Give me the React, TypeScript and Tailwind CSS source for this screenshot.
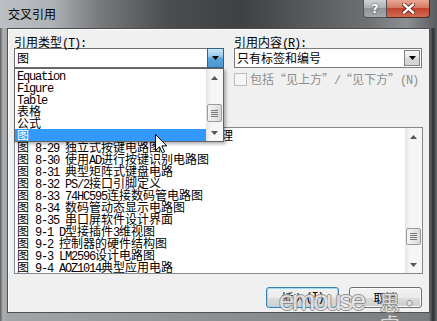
import React from "react";

const CJK = "font-['Noto_Sans_CJK_SC','Noto_Sans',sans-serif]";

function Mono({ children }: { children: React.ReactNode }) {
  return (
    <span className="font-['Liberation_Mono',monospace] tracking-[-1.2px] whitespace-pre">
      {children}
    </span>
  );
}

// ascii runs in mono (6px per char like SimSun), the rest in the CJK face
function Txt({ s }: { s: string }) {
  const parts = s.split(/([\x20-\x7e]+)/).filter((p) => p.length > 0);
  return (
    <>
      {parts.map((p, i) =>
        /^[\x20-\x7e]+$/.test(p) ? <Mono key={i}>{p}</Mono> : <span key={i}>{p}</span>
      )}
    </>
  );
}

function Arrow({ up, color }: { up?: boolean; color: string }) {
  return (
    <svg width="7" height="4" viewBox="0 0 7 4">
      <path d={up ? "M3.5 0L7 4H0Z" : "M0 0H7L3.5 4Z"} fill={color} />
    </svg>
  );
}

function VScroll({ thumb }: { thumb: string }) {
  return (
    <div className="w-[17px] h-full flex flex-col bg-[linear-gradient(90deg,#e4e4e4,#f6f6f6_30%,#f6f6f6)]">
      <div className="h-[17px] flex items-center justify-center">
        <Arrow up color="#555" />
      </div>
      <div className="flex-1">
        <div
          className={`${thumb} mx-[1px] rounded-[2px] border border-[#9a9a9a] bg-[linear-gradient(90deg,#f4f4f4,#e8e8e8_50%,#d8d8d8)] flex flex-col items-center justify-center gap-[1px]`}
        >
          <div className="w-[7px] h-[1px] bg-[#7a7a7a]" />
          <div className="w-[7px] h-[1px] bg-[#7a7a7a]" />
          <div className="w-[7px] h-[1px] bg-[#7a7a7a]" />
          <div className="w-[7px] h-[1px] bg-[#7a7a7a]" />
        </div>
      </div>
      <div className="h-[17px] flex items-center justify-center">
        <Arrow color="#555" />
      </div>
    </div>
  );
}

const dropItems = ["Equation", "Figure", "Table", "表格", "公式", "图"];

const rows = [
  "图 8-28 矩阵式键盘的行列扫描电路原理",
  "图 8-29 独立式按键电路图",
  "图 8-30 使用AD进行按键识别电路图",
  "图 8-31 典型矩阵式键盘电路",
  "图 8-32 PS/2接口引脚定义",
  "图 8-33 74HC595连接数码管电路图",
  "图 8-34 数码管动态显示电路图",
  "图 8-35 串口屏软件设计界面",
  "图 9-1 D型接插件3维视图",
  "图 9-2 控制器的硬件结构图",
  "图 9-3 LM2596设计电路图",
  "图 9-4 AOZ1014典型应用电路",
];

export default function App() {
  return (
    <div
      className={`relative w-[437px] h-[321px] overflow-hidden flex flex-col bg-[linear-gradient(90deg,#5a5c5e_0px,#aeb1b4_3px,#a2a5a8_7px,#8d9092_50%,#7a7c7e_429px,#2e2f30_433px,#6a6c6e_437px)] ${CJK} text-[12px] text-black`}
    >
      {/* title bar */}
      <div className="h-[28px] shrink-0 flex items-start bg-[linear-gradient(90deg,#bcc0c4_0%,#aeb2b6_12%,#7a7c7e_22%,#4c4d4e_38%,#3f4041_55%,#5b5c5d_72%,#6e7072_84%,#8c8f92_93%,#5a5c5e_100%)]">
        <div className="pl-[8px] pt-[7px] leading-[14px] text-[12px] text-black">交叉引用</div>
        <div className="flex-1" />
        <div className="flex pr-[7px]">
          <div className="w-[24px] h-[18px] rounded-bl-[4px] border border-t-0 border-[#4e5052] bg-[linear-gradient(#cfd1d3,#aeb1b4_45%,#929598_50%,#a4a7aa)] flex items-center justify-center text-white font-['DejaVu_Sans',sans-serif] font-bold text-[12px] leading-none [text-shadow:0_0_2px_#333]">
            ?
          </div>
          <div className="w-[43px] h-[18px] rounded-br-[4px] border border-t-0 border-l-0 border-[#4a2a24] bg-[linear-gradient(#e9a795,#d47a64_45%,#c2442e_50%,#cf6a52)] flex items-center justify-center">
            <svg width="13" height="11" viewBox="0 0 13 11">
              <path d="M2 1.5L11 9.5M11 1.5L2 9.5" stroke="#5a1a10" strokeWidth="4" strokeLinecap="square" />
              <path d="M2 1.5L11 9.5M11 1.5L2 9.5" stroke="#fff" strokeWidth="2.4" strokeLinecap="square" />
            </svg>
          </div>
        </div>
      </div>

      {/* client area */}
      <div className="mx-[7px] h-[285px] shrink-0 border border-[#4f5052] bg-[#f0f0f0] shadow-[inset_1px_1px_0_#fff] flex flex-col pt-[6px] pl-[6px] pr-[6px]">
        <div className="flex gap-[10px] h-[92px] shrink-0">
          {/* reference type */}
          <div className="relative w-[210px]">
            <div className="h-[13px] leading-[13px]">
              引用类型<Mono>(<span className="underline underline-offset-1">T</span>):</Mono>
            </div>
            <div className="h-[20px] flex items-center bg-white border border-[#6f6f6f]">
              <div className="flex-1 pl-[2px] leading-[12px]">图</div>
              <div className="-mr-[1px] h-[20px] w-[17px] border border-[#2c628b] bg-[linear-gradient(#cbe6f7,#8dc5ec_45%,#5aa4db_50%,#4d97d0)] flex items-center justify-center">
                <Arrow color="#000" />
              </div>
            </div>

            {/* open drop-down list */}
            <div className="absolute left-0 top-[33px] z-10 w-[210px] h-[74px] flex bg-white border border-[#646464] shadow-[2px_2px_3px_rgba(0,0,0,0.3)]">
              <div className="flex-1 flex flex-col">
                {dropItems.map((it, i) => (
                  <div
                    key={it}
                    className={
                      i === dropItems.length - 1
                        ? "h-[12px] leading-[12px] pl-[2px] bg-[#3399ff] text-white"
                        : "h-[12px] leading-[12px] pl-[2px]"
                    }
                  >
                    <Txt s={it} />
                  </div>
                ))}
              </div>
              <VScroll thumb="mt-[18px] h-[18px]" />
            </div>
          </div>

          {/* reference content */}
          <div className="w-[188px]">
            <div className="h-[13px] leading-[13px]">
              引用内容<Mono>(<span className="underline underline-offset-1">R</span>):</Mono>
            </div>
            <div className="h-[20px] flex items-center bg-white border border-[#7a7a7a]">
              <div className="flex-1 pl-[2px] leading-[12px]">只有标签和编号</div>
              <div className="mr-[1px] h-[16px] w-[16px] border border-[#7f7f7f] bg-[linear-gradient(#f4f4f4,#e9e9e9_45%,#dadada_50%,#d2d2d2)] flex items-center justify-center">
                <Arrow color="#000" />
              </div>
            </div>
            <div className="mt-[5px] flex items-center h-[13px] text-[#8d8d8d]">
              <div className="w-[13px] h-[13px] border border-[#bdbdbd] bg-[#f6f6f6]" />
              <div className="ml-[3px] leading-[13px] whitespace-nowrap">
                <Txt s="包括“见上方”/“见下方”(N)" />
              </div>
            </div>
          </div>
        </div>

        {/* items list */}
        <div className="h-[147px] shrink-0 flex bg-white border border-[#828790]">
          <div className="flex-1 pt-[1px] overflow-hidden whitespace-nowrap">
            {rows.map((r) => (
              <div key={r} className="h-[12px] leading-[12px] pl-[2px]">
                <Txt s={r} />
              </div>
            ))}
          </div>
          <VScroll thumb="mt-[83px] h-[17px]" />
        </div>

        {/* buttons */}
        <div className="mt-[13px] flex justify-end gap-[10px] pr-[1px]">
          <div className="w-[73px] h-[21px] rounded-[3px] border border-[#3c7fb1] shadow-[inset_0_0_0_1px_#9fdcf7] bg-[linear-gradient(#f2f2f2,#ebebeb_50%,#dddddd_50%,#cfcfcf)] flex items-center justify-center leading-[12px]">
            插入<Mono>(<span className="underline underline-offset-1">I</span>)</Mono>
          </div>
          <div className="w-[73px] h-[21px] rounded-[3px] border border-[#707070] shadow-[inset_0_0_0_1px_#fcfcfc] bg-[linear-gradient(#f2f2f2,#ebebeb_50%,#dddddd_50%,#cfcfcf)] flex items-center justify-center leading-[12px]">
            取消
          </div>
        </div>
      </div>

      {/* mouse pointer */}
      <svg className="absolute left-[155px] top-[134px] z-20" width="13" height="20" viewBox="0 0 13 20">
        <path d="M0.5 0.5V16.5L4.5 12.8L7.3 18.8L9.6 17.8L6.9 11.9H11.8Z" fill="#fff" stroke="#000" strokeWidth="1" strokeLinejoin="round" />
      </svg>

      {/* watermark */}
      <div className="absolute left-[279px] top-[287px] z-20 flex items-start gap-[16px] text-[#e4e4e4] opacity-90 [text-shadow:1px_0_#8a8a8a,-1px_0_#8a8a8a,0_1px_#8a8a8a,0_-1px_#8a8a8a]">
        <span className="font-['Liberation_Sans',sans-serif] text-[28px] leading-[28px] tracking-[-2.5px]">emouse</span>
        <span className="mt-[5px] text-[20px] leading-[22px]">思·睿</span>
      </div>
    </div>
  );
}
